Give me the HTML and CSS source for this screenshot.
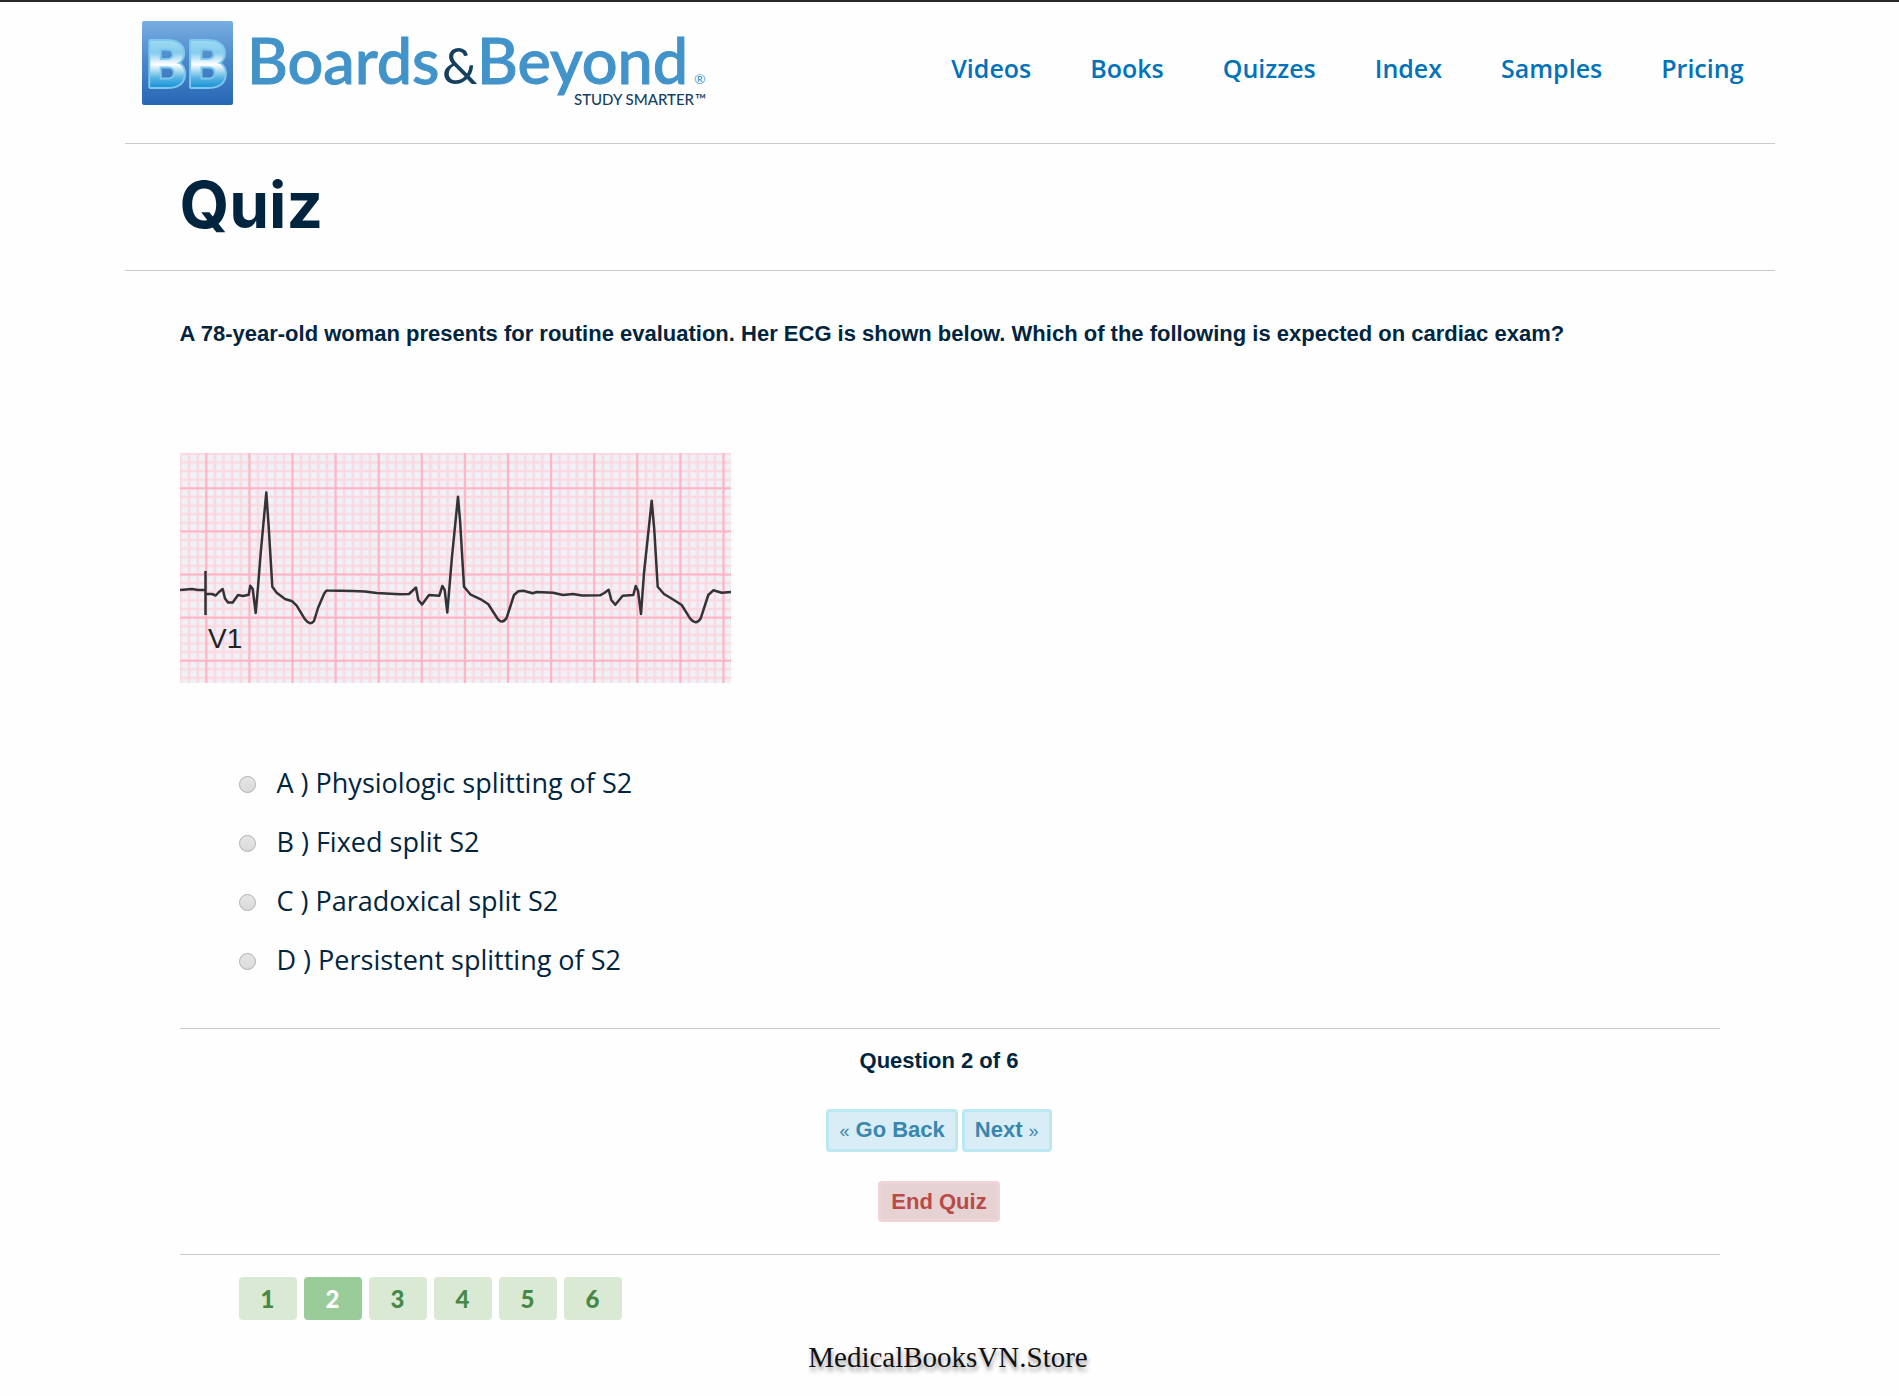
FILE: index.html
```html
<!DOCTYPE html>
<html lang="en">
<head>
<meta charset="utf-8">
<meta name="viewport" content="width=device-width, initial-scale=1">
<title>Quiz - Boards &amp; Beyond</title>
<link rel="stylesheet" href="styles.css">
</head>
<body>
<div class="site">
  <header class="site-header">
    <a class="logo" href="#" aria-label="Boards and Beyond">
      <svg width="580" height="100" viewBox="0 0 580 100">
        <defs>
          <linearGradient id="tile" x1="0" y1="0" x2="0" y2="1">
            <stop offset="0" stop-color="#78aee2"/>
            <stop offset="0.5" stop-color="#4a86c8"/>
            <stop offset="1" stop-color="#2666b4"/>
          </linearGradient>
          <linearGradient id="ice" gradientUnits="userSpaceOnUse" x1="0" y1="22" x2="0" y2="72">
            <stop offset="0" stop-color="#a3dcf3"/>
            <stop offset="0.3" stop-color="#86cdee"/>
            <stop offset="0.53" stop-color="#ffffff"/>
            <stop offset="0.8" stop-color="#55b3e2"/>
            <stop offset="1" stop-color="#1590d6"/>
          </linearGradient>
        </defs>
        <rect x="3" y="5" width="91" height="84" rx="2" fill="url(#tile)"/>
        <text class="logo-mono" x="48" y="71">BB</text>
        <text class="logo-word" x="108" y="68">Boards</text>
        <text class="logo-amp" x="303" y="68">&amp;</text>
        <text class="logo-word" x="338" y="68">Beyond</text>
        <text class="logo-reg" x="555" y="68">®</text>
        <text class="logo-tag" x="435" y="89">STUDY SMARTER</text>
        <text class="logo-tag" x="556" y="89">™</text>
      </svg>
    </a>
    <nav class="site-nav">
      <a href="#">Videos</a>
      <a href="#">Books</a>
      <a href="#">Quizzes</a>
      <a href="#">Index</a>
      <a href="#">Samples</a>
      <a href="#">Pricing</a>
    </nav>
  </header>

  <h1 class="page-title">Quiz</h1>

  <main class="content">
    <p class="question">A 78-year-old woman presents for routine evaluation. Her ECG is shown below. Which of the following is expected on cardiac exam?</p>

    <svg class="ecg" width="551" height="230" viewBox="0 0 551 230" role="img" aria-label="ECG tracing, lead V1">
      <defs>
        <pattern id="minor" x="26.3" y="35.3" width="8.62" height="8.62" patternUnits="userSpaceOnUse">
          <path d="M0 0H8.62M0 8.62H8.62M0 0V8.62M8.62 0V8.62" stroke="#fcd9e1" stroke-width="2.6"/>
        </pattern>
        <pattern id="major" x="4.75" y="13.75" width="43.1" height="43.1" patternUnits="userSpaceOnUse">
          <path d="M0 21.55H43.1M21.55 0V43.1" stroke="#ffb3c5" stroke-width="2"/>
        </pattern>
      </defs>
      <rect width="551" height="230" fill="#eef1f7"/>
      <rect width="551" height="230" fill="url(#minor)"/>
      <rect width="551" height="230" fill="url(#major)"/>
      <path class="ecg-mark" d="M25.5 118V162"/>
      <path class="ecg-trace" d="M0 137L6 136.500L12 136L18 137L25 137M26 141L32 141L35.700 142.500L39 139L42.700 136L45 145.500L48 149.500H52.700L58 142L63 143L68.700 141.700L70.300 132.700L72.700 136L75.700 160L78 134L80.700 100L86.300 39.500L88.700 74L92.300 133.700L96.700 139.700L105 146L112.300 148.300L116.700 152.700L125 166.300Q130 173 134 168L138 155L144 141Q146 137 148 137.500L173 138L185 138.500L196.700 140L220 141.300L229 141L236 134.500L238.300 147L242 151.500L249 142L259.300 142.700L262.300 133L264.700 137L267.300 159.500L272 103.700L278 43.700L280 67L284 133.700L290.700 141.700L300.700 146.300L308.300 151.300L317.300 165.300Q322 172 326.700 164.700L334 142L338.300 138.300L343.300 137.700L352.700 140.300L356.700 139L373 139.700L383 142L393 141L402 142.500L420 142.300L424.300 140L428.700 136.700L431.300 147L435.300 151.700L442.700 142.700L453.300 142L455.700 133L458 137.700L461 161L464 120L471.700 47.700L474.300 77L477.700 133.700L484 141L492.300 146L501.700 152L510 165.300Q516 173 520.700 165.300L528.300 142L533.300 137.300L541.700 139.700L551 139"/>
      <text class="ecg-label" x="28" y="195">V1</text>
    </svg>

    <form class="quiz">
      <div class="options">
        <label class="option"><input type="radio" name="answer" value="A"><span>A ) Physiologic splitting of S2</span></label>
        <label class="option"><input type="radio" name="answer" value="B"><span>B ) Fixed split S2</span></label>
        <label class="option"><input type="radio" name="answer" value="C"><span>C ) Paradoxical split S2</span></label>
        <label class="option"><input type="radio" name="answer" value="D"><span>D ) Persistent splitting of S2</span></label>
      </div>

      <div class="controls">
        <p class="progress">Question 2 of 6</p>
        <div class="steps">
          <button class="btn" type="button"><span class="chevron">«</span> Go Back</button>
          <button class="btn" type="button">Next <span class="chevron">»</span></button>
        </div>
        <button class="btn btn-end" type="button">End Quiz</button>
      </div>
    </form>

    <nav class="pages" aria-label="Questions">
      <a href="#">1</a>
      <a class="current" href="#" aria-current="page">2</a>
      <a href="#">3</a>
      <a href="#">4</a>
      <a href="#">5</a>
      <a href="#">6</a>
    </nav>
  </main>

  <footer class="site-footer">MedicalBooksVN.Store</footer>
</div>
</body>
</html>
```
FILE: styles.css
```css
* {
  box-sizing: border-box;
}

body {
  margin: 0;
  border-top: 2px solid #2b2a2b;
  background: #fefefe;
  color: #02253f;
  font-family: "Liberation Sans", Arial, sans-serif;
  font-size: 22px;
}

.site {
  max-width: 1650px;
  margin: 0 auto;
}

.site-header {
  display: flex;
  align-items: center;
  justify-content: space-between;
  padding: 14px 31px 27px 14px;
  border-bottom: 1px solid #cacaca;
}

.logo svg {
  display: block;
}

.logo-word,
.logo-amp,
.logo-reg,
.logo-tag {
  font-family: Lato, sans-serif;
  fill: #4193c9;
}

.logo-word {
  font-size: 63px;
  font-weight: 500;
  stroke: #4193c9;
  stroke-width: 1px;
}

.logo-amp {
  font-size: 50px;
  fill: #153f5f;
}

.logo-reg {
  font-size: 14px;
}

.logo-tag {
  font-size: 15px;
  font-weight: 500;
  fill: #153f5f;
}

.logo-mono {
  font-family: Roboto, sans-serif;
  font-size: 64px;
  font-weight: 700;
  text-anchor: middle;
  fill: url(#ice);
  stroke: #7cc8ee;
  stroke-width: 4px;
  stroke-linejoin: round;
  paint-order: stroke;
}

.site-nav {
  display: flex;
  gap: 59px;
  padding-top: 4px;
}

.site-nav a {
  color: #0272bb;
  font-family: "Open Sans", sans-serif;
  font-size: 25px;
  font-weight: 600;
  line-height: 38px;
  text-decoration: none;
}

.page-title {
  margin: 0;
  padding: 21px 55px 25px;
  border-bottom: 1px solid #cacaca;
  font-family: Inter, sans-serif;
  font-size: 64px;
  font-weight: 700;
  line-height: 80px;
}

.content {
  padding: 46px 55px 0;
}

.question,
.progress {
  margin: 0;
  font-weight: 700;
  line-height: 34px;
}

.ecg {
  display: block;
  max-width: 100%;
  margin-top: 102px;
}

.ecg-trace,
.ecg-mark {
  fill: none;
  stroke: #333236;
  stroke-width: 2.5;
  stroke-linejoin: round;
}

.ecg-label {
  font-family: "Liberation Sans", sans-serif;
  font-size: 28px;
  fill: #222;
}

.options {
  padding: 72px 0 37px 59px;
  border-bottom: 1px solid #cacaca;
}

.option {
  display: flex;
  align-items: center;
  gap: 21px;
  font-family: "Open Sans", sans-serif;
  font-size: 27px;
  line-height: 56px;
}

.option span {
  padding-bottom: 3px;
}

.option input {
  appearance: none;
  width: 17px;
  height: 17px;
  margin: 0;
  border: 1px solid #b0b0b0;
  border-radius: 50%;
  background: linear-gradient(#e6e6e6, #dadada);
}

.option input:checked {
  background: radial-gradient(#444 35%, #e0e0e0 40%);
}

.controls {
  display: flex;
  flex-direction: column;
  align-items: center;
  padding: 15px 21px 32px 0;
  border-bottom: 1px solid #cacaca;
}

.steps {
  display: flex;
  gap: 4px;
  margin: 31px 0 29px;
}

.btn {
  padding: 0 10px;
  border: 3px solid #bce8f1;
  border-radius: 4px;
  background: #d9edf7;
  color: #3a87ad;
  font: 700 22px/35px "Liberation Sans", Arial, sans-serif;
}

.chevron {
  font-size: 18px;
  font-weight: 400;
}

.btn-end {
  border-color: #eed3d7;
  background: #e6d1d3;
  color: #b94a48;
}

.pages {
  display: flex;
  gap: 7px;
  padding: 22px 0 0 59px;
}

.pages a {
  width: 58px;
  border-radius: 4px;
  background: #dae9d3;
  color: #468847;
  font-family: Lato, sans-serif;
  font-size: 24px;
  font-weight: 900;
  line-height: 43px;
  text-align: center;
  text-decoration: none;
}

.pages .current {
  background: #99cc99;
  color: #fff;
}

.site-footer {
  padding: 19px 3px 20px 0;
  color: #111;
  font-family: "Palatino Linotype", Palatino, "Liberation Serif", serif;
  font-size: 29px;
  line-height: 36px;
  text-align: center;
  text-shadow: 1px 4px 4px rgba(0, 0, 0, 0.4);
}
```
